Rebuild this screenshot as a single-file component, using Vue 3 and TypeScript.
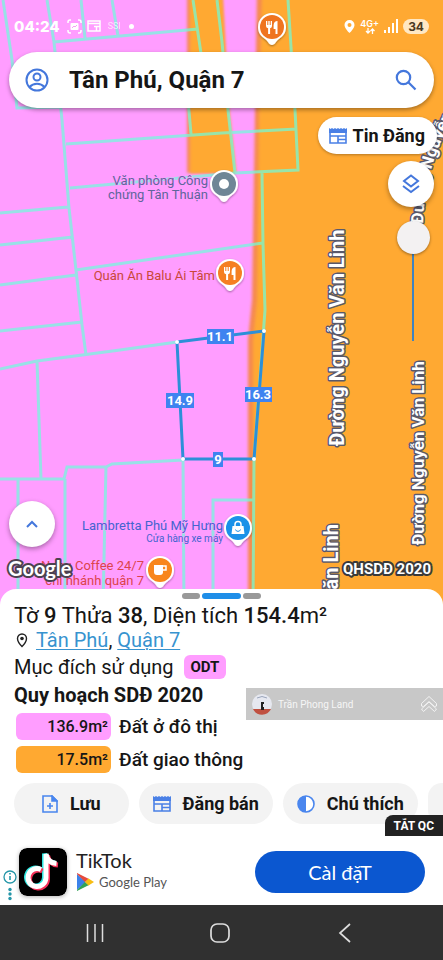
<script setup lang="ts">
import { ref } from 'vue'

interface LandUse {
  area: string
  label: string
  kind: 'urban' | 'traffic'
}

const query = ref('Tân Phú, Quận 7')
const opacity = ref(100)

const landUses: LandUse[] = [
  { area: '136.9m²', label: 'Đất ở đô thị', kind: 'urban' },
  { area: '17.5m²', label: 'Đất giao thông', kind: 'traffic' },
]

const parcelLines = [
  'M3 0L12 60L17 108L62 107',
  'M47 0L54 42L62 120L69 208L76 270L82 325L86 355',
  'M81 0L85 38M112 0L118 36M54 42L198 29',
  'M193 0L202 60M217 0L222 42L228 110L235 173M188 100L191 134',
  'M288 0L295 110L298 170L235 173L70 188M66 144L222 133L297 129',
  'M262 173L263 244L265 310L254 460L253 605M76 270L263 243',
  'M0 213L68 207M0 245L73 237M0 285L76 275M0 331L82 322',
  'M0 369L37 361L120 350L177 342M37 361L41 479',
  'M0 479L64 479L67 467L106 467L112 464L183 460M18 479V605M65 479V605M106 466L103 605M183 460L184 605',
  'M213 605V500H254',
].join('')
</script>

<template>
  <div class="screen">
    <main class="map">
      <svg class="map-canvas" viewBox="0 0 443 605" preserveAspectRatio="xMinYMin slice" role="img" aria-label="Bản đồ quy hoạch">
        <defs>
          <filter id="soft" x="-10%" y="-5%" width="120%" height="110%"><feGaussianBlur stdDeviation="1.5" /></filter>
          <filter id="drop" x="-30%" y="-30%" width="160%" height="160%"><feDropShadow dx="0" dy="1" stdDeviation="1" flood-opacity=".4" /></filter>
          <path id="curve" d="M423 224C424 196 429 166 447 128C456 108 464 92 470 76" />
          <path id="pin" d="M0-14A14 14 0 0 1 14 0C14 6 11 9 7 12C4 14 3 18 0 18C-3 18-4 14-7 12C-11 9-14 6-14 0A14 14 0 0 1 0-14Z" />
          <g id="cutlery" fill="#fff">
            <path d="M-6-6h1.300v4h1v-4h1.400v4h1v-4H0v5q0 1.700-1.900 2.200V7h-2V1.200Q-6 .7-6-1Z" />
            <path d="M5.500-6V7h-2V2H1.600V-2Q2-5.800 5.500-6Z" />
          </g>
        </defs>
        <rect width="443" height="605" fill="#ff9dff" />
        <g filter="url(#soft)">
          <path d="M257-10L255 110L252 300L248 340V615H460V-10Z" fill="#f58a50" />
          <path d="M187-10V173H235L228 110L222-10Z" fill="#f58a60" />
        </g>
        <g filter="url(#soft)">
          <path d="M262-10L259 110L257 300L253 340V615H460V-10Z" fill="#ffa931" />
          <path d="M190-10V173H236L229 110L222-10Z" fill="#ffa931" />
        </g>
        <path :d="parcelLines" fill="none" stroke="#6cfddb" stroke-opacity=".7" stroke-width="3" />

        <g class="street">
          <text font-size="20" transform="translate(344 446) rotate(-90)">Đường Nguyễn Văn Linh</text>
          <text font-size="17" transform="translate(424 545) rotate(-90)">Đường Nguyễn Văn Linh</text>
          <text font-size="20" text-anchor="end" transform="translate(338 524) rotate(-90)">Đường Nguyễn Văn Linh</text>
          <text font-size="17"><textPath href="#curve">Đường Nguyễn</textPath></text>
        </g>

        <path d="M177 342L264 331L254 459L183 459Z" fill="none" stroke="#2d8fd8" stroke-width="3" />
        <g fill="#fff">
          <circle cx="177" cy="342" r="2" /><circle cx="264" cy="331" r="2" />
          <circle cx="254" cy="459" r="2" /><circle cx="183" cy="459" r="2" />
        </g>
        <g fill="#3f83f0">
          <rect x="207" y="329" width="27" height="15" /><rect x="166" y="393" width="28" height="15" />
          <rect x="245" y="387" width="27" height="15" /><rect x="213" y="452" width="10" height="15" />
        </g>
        <g class="measure">
          <text x="220" y="341">11.1</text><text x="180" y="405">14.9</text>
          <text x="258" y="399">16.3</text><text x="218" y="464">9</text>
        </g>

        <g class="place" text-anchor="end">
          <g fill="#60659c"><text x="208" y="185">Văn phòng Công</text><text x="208" y="199">chứng Tân Thuận</text></g>
          <text x="215" y="280" fill="#c9483a">Quán Ăn Balu Ái Tâm</text>
          <g fill="#4464cf"><text x="223" y="530">Lambretta Phú Mỹ Hưng</text><text class="small" x="223" y="542">Cửa hàng xe máy</text></g>
          <g fill="#dc444c"><text x="144" y="570">Napu Coffee 24/7</text><text x="144" y="585">chi nhánh quận 7</text></g>
        </g>

        <g transform="translate(224 184)"><use href="#pin" fill="#fff" filter="url(#drop)" /><circle r="12" fill="#6f8696" /><circle r="5" fill="#fff" /></g>
        <g transform="translate(230 273)"><use href="#pin" fill="#fff" filter="url(#drop)" /><circle r="12" fill="#f57f22" /><use href="#cutlery" /></g>
        <g transform="translate(272 27)"><use href="#pin" fill="#fff" filter="url(#drop)" /><circle r="12" fill="#ef7420" /><use href="#cutlery" /></g>
        <g transform="translate(238 528)">
          <use href="#pin" fill="#fff" filter="url(#drop)" /><circle r="12" fill="#1a91e8" />
          <path d="M-5.500-2h11L6.500 6h-13Z" fill="#fff" /><path d="M-3-2v-1.500a3 3 0 0 1 6 0V-2" fill="none" stroke="#fff" stroke-width="1.500" /><path d="M-2.500 1.500a2.600 2.600 0 0 0 5 0" fill="none" stroke="#1a91e8" />
        </g>
        <g transform="translate(160 570)">
          <use href="#pin" fill="#fff" filter="url(#drop)" /><circle r="12" fill="#f8861c" />
          <path d="M-6-5h9v7a3 3 0 0 1-3 3h-3a3 3 0 0 1-3-3Z" fill="#fff" /><path d="M3-4h3v4H3" fill="none" stroke="#fff" stroke-width="1.500" />
        </g>
        <text class="google" x="8" y="576">Google</text>
        <text class="plan-year" x="343" y="574">QHSDĐ 2020</text>
      </svg>

      <div class="status">
        <span class="clock">04:24</span>
        <svg width="15" height="15" viewBox="0 0 15 15" fill="none" stroke="currentColor" stroke-width="1.500"><path d="M1 4V3a2 2 0 0 1 2-2h1M11 1h1a2 2 0 0 1 2 2v1M14 11v1a2 2 0 0 1-2 2h-1M4 14H3a2 2 0 0 1-2-2v-1" /><rect x="3.500" y="4" width="8" height="7" rx="1" fill="currentColor" stroke="none" /><path d="M5 9l2-2 1 1 2-2" stroke="#f5a0f5" stroke-width="1" /></svg>
        <svg width="14" height="12" viewBox="0 0 14 12" fill="none" stroke="currentColor" stroke-width="1.500"><rect x="1" y="1" width="12" height="10" /><path d="M1 3.500h12M7 6.500h6M9.500 6.500V11" /></svg>
        <span class="carrier">SSI</span>
        <span class="dot"></span>
        <span class="fill"></span>
        <svg width="11" height="13" viewBox="0 0 11 13"><path fill="currentColor" fill-rule="evenodd" d="M5.500 0A5 5 0 0 1 10.500 5C10.500 8.500 5.500 13 5.500 13S.5 8.500.5 5a5 5 0 0 1 5-5Zm0 3a2 2 0 1 0 0 4 2 2 0 0 0 0-4Z" /></svg>
        <span class="network"><span>4G+</span><svg width="10" height="6" viewBox="0 0 10 6" fill="none" stroke="currentColor" stroke-width="1.300"><path d="M3 0v5M1 3l2 2 2-2M7.500 6V1M5.500 3l2-2 2 2" /></svg></span>
        <svg width="14" height="14" viewBox="0 0 14 14" fill="currentColor"><path d="M0 11h2v3H0zM4 8h2v6H4zM8 4h2v10H8zM12 0h2v14h-2z" /></svg>
        <span class="battery">34</span>
      </div>

      <form class="search" @submit.prevent>
        <button type="button" aria-label="Tài khoản">
          <svg width="24" height="24" viewBox="0 0 24 24" fill="none" stroke="#4477dc" stroke-width="2"><circle cx="12" cy="12" r="10.500" /><circle cx="12" cy="9" r="3.500" /><path d="M4.500 19c4-4.500 11-4.500 15 0" /></svg>
        </button>
        <input v-model="query" type="text" aria-label="Tìm kiếm" />
        <button type="submit" aria-label="Tìm">
          <svg width="22" height="22" viewBox="0 0 22 22" fill="none" stroke="#4477dc" stroke-width="2.200"><circle cx="8.500" cy="8.500" r="6.700" /><path d="M13.300 13.300l7.200 7.200" /></svg>
        </button>
      </form>

      <button class="post" type="button">
        <svg width="18" height="16" viewBox="0 0 18 16"><use href="#news" /></svg>
        Tin Đăng
      </button>
      <button class="round layers" type="button" aria-label="Lớp bản đồ">
        <svg width="20" height="20" viewBox="0 0 20 20" fill="none" stroke="#4477dc" stroke-width="2"><path d="M10 1.500l7 5.500-7 5.500L3 7Z" /><path d="M2 12l8 6 8-6" /></svg>
      </button>
      <input v-model="opacity" class="opacity" type="range" min="0" max="100" aria-label="Độ mờ" />
      <button class="round expand" type="button" aria-label="Mở rộng">
        <svg width="14" height="10" viewBox="0 0 14 10" fill="none" stroke="#4477dc" stroke-width="2"><path d="M2 8l5-5 5 5" /></svg>
      </button>
    </main>

    <svg class="symbols" aria-hidden="true">
      <symbol id="news" viewBox="0 0 18 16">
        <path d="M0 0l1.500 1L3 0l1.500 1L6 0l1.500 1L9 0l1.500 1L12 0l1.500 1L15 0l1.500 1L18 0v5H0Z" fill="#4a80e6" />
        <path d="M1 4v11h16V4M1 8h16M9 8v7M9 11.500h8" fill="none" stroke="#4a80e6" stroke-width="1.600" />
      </symbol>
    </svg>

    <section class="sheet">
      <div class="pager"><i></i><i class="active"></i><i></i></div>
      <h1>Tờ <b>9</b> Thửa <b>38</b>, Diện tích <b>154.4</b>m²</h1>
      <p class="line place-line">
        <svg width="12" height="15" viewBox="0 0 12 15"><path d="M6 1a4.500 4.500 0 0 1 4.500 4.500C10.500 9 6 13.500 6 13.500S1.500 9 1.500 5.500A4.500 4.500 0 0 1 6 1Z" fill="none" stroke="#222" stroke-width="1.400" /><circle cx="6" cy="5.500" r="1.800" fill="#222" /></svg>
        <span><a href="#tan-phu">Tân Phú</a>, <a href="#quan-7">Quận 7</a></span>
      </p>
      <p class="line purpose">Mục đích sử dụng <span class="tag">ODT</span></p>
      <h2>Quy hoạch SDĐ 2020</h2>
      <ul class="uses">
        <li v-for="use in landUses" :key="use.label">
          <span class="area" :class="use.kind">{{ use.area }}</span>{{ use.label }}
        </li>
      </ul>
      <div class="actions">
        <button type="button">
          <svg width="16" height="18" viewBox="0 0 16 18" fill="none" stroke="#4a86ee" stroke-width="1.600"><path d="M1 1h9l5 5v11H1Z" /><path d="M10 1v5h5Z" fill="#4a86ee" /><path d="M8 8v6M5 11h6" /></svg>
          Lưu
        </button>
        <button type="button">
          <svg width="18" height="16" viewBox="0 0 18 16"><use href="#news" /></svg>
          Đăng bán
        </button>
        <button type="button">
          <svg width="18" height="18" viewBox="0 0 18 18"><circle cx="9" cy="9" r="8" fill="#fff" stroke="#4a86ee" stroke-width="1.600" /><path d="M9 1a8 8 0 0 0 0 16Z" fill="#4a86ee" /></svg>
          Chú thích
        </button>
        <button type="button" aria-label="Thêm"></button>
      </div>
      <div class="watermark">
        <svg width="22" height="22" viewBox="0 0 22 22"><circle cx="11" cy="11" r="10" fill="#e6e8f0" /><path d="M2 16h18a10 10 0 0 1-18 0Z" fill="#c05040" /><path d="M10 9h3v2h-1v3h1v3h-3Z" fill="#222" /><path d="M6 5q5-3 10 0" stroke="#9aa5bb" fill="none" /></svg>
        <span>Trần Phong Land</span>
        <svg width="18" height="18" viewBox="0 0 18 18" fill="none" stroke="#f3f3f3"><path d="M1.500 8.500L9 1.500l7.500 7v2.500l-2 .5L9 6.500l-5.500 5-2-.5Z" /><path d="M1.500 14L9 7l7.500 7-2 2.500L9 11.500l-5.500 5Z" /></svg>
      </div>
      <button class="close-ad" type="button">TẮT QC</button>
    </section>

    <section class="ad">
      <svg class="ad-info" width="14" height="32" viewBox="0 0 14 32"><circle cx="7" cy="8" r="6" fill="none" stroke="#2596a8" stroke-width="1.300" /><path d="M7 7v4M7 4v1.500" stroke="#2596a8" stroke-width="1.600" /><g fill="#2596a8"><circle cx="7" cy="20.500" r="1.700" /><circle cx="7" cy="25" r="1.700" /><circle cx="7" cy="29.500" r="1.700" /></g></svg>
      <svg class="app-icon" width="48" height="48" viewBox="0 0 48 48">
        <rect width="48" height="48" rx="8" fill="#000" />
        <g fill="none" stroke-width="5"><path d="M22 21.500a9 9 0 1 0 5 8.500V6c1 6 4.500 9 10.500 9.500" stroke="#2ee6e0" transform="translate(-1.500 -.5)" /><path d="M22 21.500a9 9 0 1 0 5 8.500V6c1 6 4.500 9 10.500 9.500" stroke="#f53058" transform="translate(1.500 1.500)" /><path d="M22 21.500a9 9 0 1 0 5 8.500V6c1 6 4.500 9 10.500 9.500" stroke="#fff" /></g>
      </svg>
      <div class="ad-text">
        <strong>TikTok</strong>
        <span>
          <svg width="18" height="18" viewBox="0 0 18 18"><path d="M1 1l9 8-9 8Z" fill="#3b82ea" /><path d="M1 0l12 6-4 3-8-8Z" fill="#e64a3c" /><path d="M1 18l12-6-4-3-8 8Z" fill="#33a457" /><path d="M12.500 5.500L18 9l-5.500 3.500L9 9Z" fill="#f7bd13" /></svg>
          Google Play
        </span>
      </div>
      <button class="install" type="button">Càl đặT</button>
    </section>

    <nav class="system">
      <button type="button" aria-label="Gần đây"><svg width="18" height="18" viewBox="0 0 18 18" stroke="#ddd" stroke-width="1.500"><path d="M1.500 0v18M9 0v18M16.500 0v18" /></svg></button>
      <button type="button" aria-label="Trang chủ"><svg width="20" height="20" viewBox="0 0 20 20" fill="none" stroke="#ddd" stroke-width="1.700"><rect x="1" y="1" width="18" height="18" rx="6" /></svg></button>
      <button type="button" aria-label="Quay lại"><svg width="14" height="20" viewBox="0 0 14 20" fill="none" stroke="#ddd" stroke-width="1.700"><path d="M12 1L2 10l10 9" /></svg></button>
    </nav>
  </div>
</template>

<style>
body { background: #fff; }
</style>

<style scoped>
.screen { display: flex; flex-direction: column; min-height: 100vh; overflow: hidden; font-family: Roboto, "Noto Sans", sans-serif; color: #161616; }
button { display: flex; align-items: center; justify-content: center; padding: 0; border: 0; background: none; font: inherit; color: inherit; cursor: pointer; }
svg { flex: none; }
.symbols { position: absolute; width: 0; height: 0; }

.map { position: relative; flex: 1 0 auto; display: flex; flex-direction: column; margin-bottom: -16px; padding-bottom: 58px; box-sizing: border-box; background: #ffa931; }
.map-canvas { position: absolute; top: 0; left: 0; width: 100%; height: 100%; }
.street { fill: #fff; stroke: #59596b; stroke-width: 3px; stroke-linejoin: round; paint-order: stroke; font-weight: 700; }
.measure { fill: #fff; font-size: 13px; font-weight: 700; text-anchor: middle; }
.place { font-size: 13px; stroke: #ff9dff; stroke-width: 1px; paint-order: stroke; }
.small { font-size: 10px; }
.google { fill: #fff; stroke: #4c4250; stroke-width: 4px; stroke-linejoin: round; paint-order: stroke; font: 700 20px Lato, sans-serif; }
.plan-year { fill: #fff; stroke: #3a3a3a; stroke-width: 4px; stroke-linejoin: round; paint-order: stroke; font-size: 15px; font-weight: 700; }

.status { position: relative; display: flex; align-items: center; gap: 5px; height: 52px; padding: 0 14px; color: #fff; }
.clock { margin-right: 2px; font: 800 15px Inter, sans-serif; }
.carrier { font-size: 9px; margin-left: 2px; opacity: .7; }
.dot { width: 5px; height: 5px; margin-left: 3px; border-radius: 50%; background: #fff; }
.fill { flex: 1; }
.network { display: flex; flex-direction: column; align-items: center; font: 600 9px/9px Inter, sans-serif; }
.battery { padding: 0 5px; border-radius: 8px; background: #ffe8c4; color: #4a3a22; font: 700 12px/15px Inter, sans-serif; }

.search { position: relative; display: flex; align-items: center; gap: 20px; height: 56px; margin: 0 9px; padding: 0 17px 0 16px; box-sizing: border-box; border-radius: 28px; background: #fff; box-shadow: 0 2px 4px rgb(0 0 0 / .35); }
.search input { flex: 1; min-width: 0; padding: 0; border: 0; outline: 0; background: none; font: 700 24px Roboto, sans-serif; color: #161616; }
.post { position: relative; align-self: flex-end; gap: 6px; height: 37px; margin: 9px 6px 0 0; padding: 0 12px 0 11px; border-radius: 19px; background: #fff; box-shadow: 0 1px 3px rgb(0 0 0 / .3); font-size: 18px; font-weight: 700; }
.round { position: relative; width: 46px; height: 46px; border-radius: 50%; background: #fff; box-shadow: 0 2px 5px rgb(0 0 0 / .35); }
.layers { align-self: flex-end; margin: 7px 9px 0 0; }
.opacity { position: relative; align-self: flex-end; width: 34px; height: 120px; margin: 14px 13px 0 0; appearance: none; writing-mode: vertical-lr; direction: rtl; background: linear-gradient(#3f83c0, #3f83c0) center / 2px 100% no-repeat; }
.opacity::-webkit-slider-thumb { appearance: none; width: 33px; height: 33px; border-radius: 50%; background: #f3f1f2; box-shadow: 0 1px 3px rgb(0 0 0 / .4); }
.expand { margin: auto 0 0 9px; }

.sheet { position: relative; padding: 4px 14px 14px; border-radius: 16px 16px 0 0; background: #fff; }
.pager { display: flex; justify-content: center; gap: 2px; height: 6px; }
.pager i { width: 18px; border-radius: 3px; background: #999; }
.pager .active { width: 39px; background: #1f8ee8; }
h1, h2, p, ul { margin: 0; padding: 0; font-size: 20px; font-weight: 400; list-style: none; }
h1 { margin-top: 5px; font-size: 22px; line-height: 24px; }
h1 b { font-weight: 500; }
.line { display: flex; align-items: center; line-height: 24px; }
.place-line { gap: 8px; padding-left: 2px; }
a { color: #3793cf; text-decoration: underline; text-underline-offset: 2px; text-decoration-thickness: 1px; }
.purpose { gap: 10px; height: 29px; }
.tag { padding: 0 7px; border-radius: 6px; background: #ff9dff; font-size: 15px; font-weight: 700; }
h2 { line-height: 28px; font-weight: 700; }
.uses { display: flex; flex-direction: column; gap: 6px; margin-top: 4px; padding-left: 2px; }
.uses li { display: flex; align-items: center; gap: 8px; font-size: 19px; font-weight: 500; line-height: 27px; }
.area { width: 95px; padding-right: 3px; box-sizing: border-box; border-radius: 6px; text-align: right; font-size: 16px; }
.urban { background: #ff9dff; }
.traffic { background: #ffa931; }
.actions { display: flex; gap: 10px; margin: 10px -14px 0 0; overflow: hidden; }
.actions button { flex: none; gap: 12px; height: 41px; padding: 0 28px; border-radius: 21px; background: #f3f3f3; font-size: 18px; font-weight: 700; }
.actions button:nth-child(n+2) { padding: 0 14px; }
.watermark { position: absolute; top: 99px; right: 0; display: flex; align-items: center; gap: 5px; width: 197px; height: 32px; padding: 0 5px; box-sizing: border-box; background: #c8c8c8; color: #f6f6f6; font-size: 10px; }
.watermark span { flex: 1; }
.close-ad { position: absolute; right: 0; bottom: 2px; height: 21px; padding: 0 9px; border-radius: 8px 0 0; background: #222; color: #fff; font-size: 12px; font-weight: 700; }

.ad { display: flex; align-items: center; height: 67px; padding: 0 18px 0 3px; background: #fff; }
.ad-info { align-self: flex-end; margin: 0 2px 4px 0; }
.app-icon { border-radius: 8px; box-shadow: 0 1px 4px rgb(0 0 0 / .3); }
.ad-text { flex: 1; display: flex; flex-direction: column; margin-left: 9px; color: #222; }
.ad-text strong { margin-top: -4px; font: 400 20px/24px Lato, sans-serif; }
.ad-text span { display: flex; align-items: center; gap: 5px; font: 400 13px/20px Lato, sans-serif; color: #555; }
.install { width: 170px; height: 42px; border-radius: 21px; background: #0b57d0; color: #fff; font: 400 20px Lato, sans-serif; }
.system { display: flex; height: 55px; padding: 0 36px 0 33px; background: #303030; }
.system button { flex: 1; }
</style>
